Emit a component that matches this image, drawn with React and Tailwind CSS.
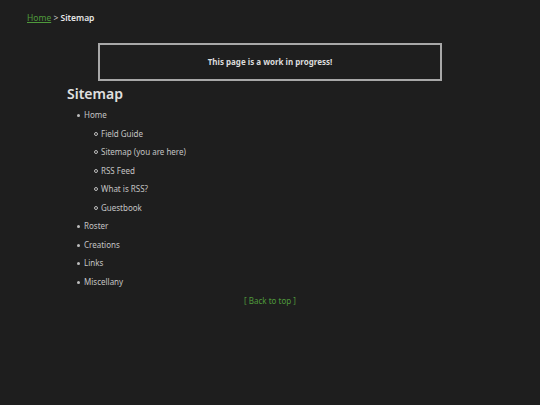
const subPages = ["Field Guide", "Sitemap (you are here)", "RSS Feed", "What is RSS?", "Guestbook"];
const topPages = ["Roster", "Creations", "Links", "Miscellany"];

function Bullet({ hollow }) {
  return hollow ? (
    <span className="inline-block w-[4px] h-[4px] rounded-full border border-[#bdbdbd] mr-[3px] translate-y-[-1px]" />
  ) : (
    <span className="inline-block w-[3px] h-[3px] rounded-full bg-[#bdbdbd] mr-[4px] translate-y-[-1px]" />
  );
}

export default function App() {
  return (
    <div
      className="min-h-[405px] bg-[#1e1e1e] text-[#c4c4c4]"
      style={{ fontFamily: "'Noto Sans', 'Open Sans', sans-serif" }}
    >
      <div className="pl-[27px] pt-[12px] text-[8.5px] leading-[12px]">
        <a href="#" className="text-[#4f9a3c] underline">Home</a>
        <span className="text-[#c8c8c8]"> &gt; </span>
        <span className="font-semibold text-[#e6e6e6]">Sitemap</span>
      </div>

      <main className="mx-[67px] mt-[19px]">
        <div className="mx-[31px] h-[38px] border-2 border-[#a8a8a8] flex items-center justify-center">
          <p className="text-[8px] font-bold text-[#dcdcdc]">This page is a work in progress!</p>
        </div>

        <h1 className="mt-[3px] text-[14px] leading-[20px] font-semibold text-[#e0e0e0]">Sitemap</h1>

        <ul className="mt-[5px] pl-[10px] text-[8px] leading-[12px]">
          <li className="h-[18.5px]">
            <Bullet />Home
          </li>
          {subPages.map((p) => (
            <li key={p} className="h-[18.5px] pl-[17px]">
              <Bullet hollow />{p}
            </li>
          ))}
          {topPages.map((p) => (
            <li key={p} className="h-[18.5px]">
              <Bullet />{p}
            </li>
          ))}
        </ul>

        <div className="text-center text-[8px] leading-[12px] mt-[1px]">
          <a href="#" className="text-[#4f9a3c]">[ Back to top ]</a>
        </div>
      </main>
    </div>
  );
}
